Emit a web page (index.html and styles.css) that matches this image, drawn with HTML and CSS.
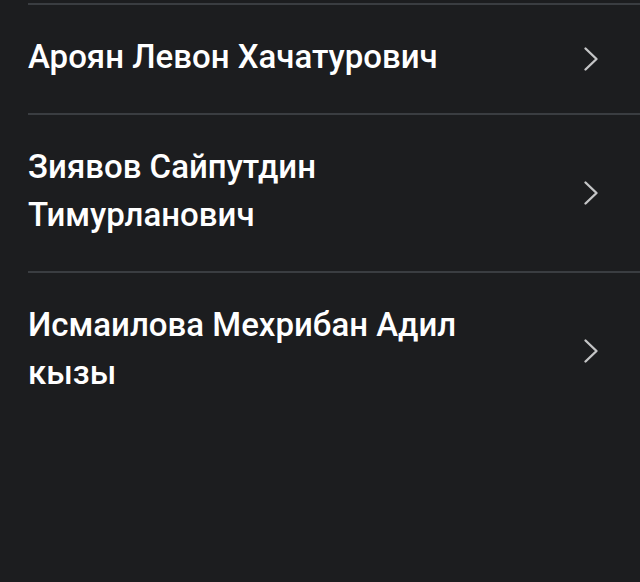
FILE: index.html
```html
<!DOCTYPE html>
<html lang="ru">
<head>
<meta charset="utf-8">
<link rel="stylesheet" href="styles.css">
</head>
<body>
<ul class="list">
  <li class="item">
    <span class="name">Ароян Левон Хачатурович</span>
    <svg class="chev" viewBox="0 0 16 26" width="16" height="26"><path d="M2.5 2.5 L13.5 13 L2.5 23.5" fill="none" stroke="#c4c5c6" stroke-width="2.4" stroke-linecap="round" stroke-linejoin="round"/></svg>
  </li>
  <li class="item">
    <span class="name">Зиявов Сайпутдин Тимурланович</span>
    <svg class="chev" viewBox="0 0 16 26" width="16" height="26"><path d="M2.5 2.5 L13.5 13 L2.5 23.5" fill="none" stroke="#c4c5c6" stroke-width="2.4" stroke-linecap="round" stroke-linejoin="round"/></svg>
  </li>
  <li class="item">
    <span class="name">Исмаилова Мехрибан Адил кызы</span>
    <svg class="chev" viewBox="0 0 16 26" width="16" height="26"><path d="M2.5 2.5 L13.5 13 L2.5 23.5" fill="none" stroke="#c4c5c6" stroke-width="2.4" stroke-linecap="round" stroke-linejoin="round"/></svg>
  </li>
</ul>
</body>
</html>
```
FILE: styles.css
```css
html, body {
  margin: 0;
  padding: 0;
  background: #1c1d1f;
  height: 100%;
}
body {
  font-family: Roboto, "Noto Sans", sans-serif;
  color: #ffffff;
}
.list {
  list-style: none;
  margin: 0;
  padding: 3px 0 0 28px;
}
.item {
  display: flex;
  align-items: center;
  border-top: 2px solid #3a3d41;
  padding: 0 41px 0 0;
}
.name {
  flex: 1;
  font-size: 33px;
  font-weight: 500;
  line-height: 48px;
  padding: 28px 80px 32px 0;
}
.chev {
  flex: none;
  display: block;
}
```
